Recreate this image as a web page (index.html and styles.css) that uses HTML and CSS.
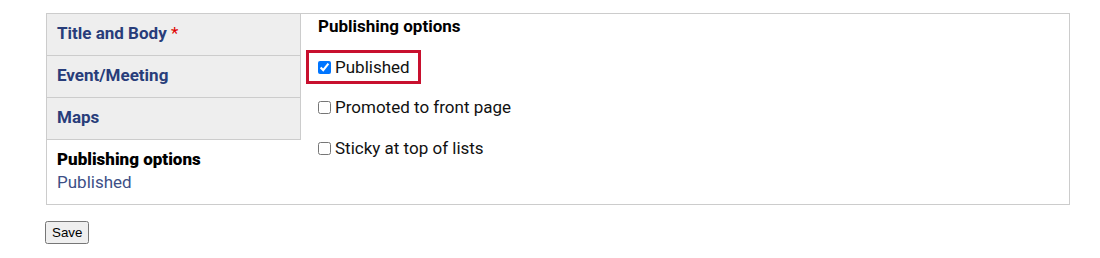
FILE: index.html
```html
<!DOCTYPE html>
<html lang="en">
<head>
<meta charset="utf-8">
<title>Publishing options</title>
<link rel="stylesheet" href="styles.css">
</head>
<body>
<div class="page">
  <div class="vtabs">
    <ul class="tab-list">
      <li class="tab"><a class="tab-link" href="#">Title and Body <span class="req">*</span></a></li>
      <li class="tab"><a class="tab-link" href="#">Event/Meeting</a></li>
      <li class="tab"><a class="tab-link" href="#">Maps</a></li>
      <li class="tab tab-active"><a class="tab-link" href="#"><strong class="tab-title">Publishing options</strong><span class="tab-summary">Published</span></a></li>
    </ul>
    <div class="pane">
      <h3 class="pane-title">Publishing options</h3>
      <div class="item"><label class="check highlight"><input type="checkbox" checked><span>Published</span></label></div>
      <div class="item"><label class="check"><input type="checkbox"><span>Promoted to front page</span></label></div>
      <div class="item"><label class="check"><input type="checkbox"><span>Sticky at top of lists</span></label></div>
    </div>
  </div>
  <button class="save" type="button">Save</button>
</div>
</body>
</html>
```

FILE: styles.css
```css
body {
  margin: 8px;
  font-family: Roboto, "Liberation Sans", sans-serif;
  font-size: 17px;
  color: #000;
  background: #fff;
}
.page {
  padding: 5px 0 0 37px;
}
.vtabs {
  box-sizing: border-box;
  width: 1024px;
  margin-left: 1px;
  border: 1px solid #ccc;
  display: flex;
}
.tab-list {
  list-style: none;
  margin: 0;
  padding: 0;
  width: 254px;
  flex: none;
  display: flex;
  flex-direction: column;
}
.tab {
  background: #eee;
  border-bottom: 1px solid #ccc;
  border-right: 1px solid #ccc;
  height: 41px;
}
.tab-link {
  display: block;
  padding: 10px 10px 12px;
  line-height: 19px;
  font-weight: 700;
  color: #283d7a;
  text-decoration: none;
}
.req {
  color: #e00000;
  font-weight: 400;
}
.tab-active {
  background: #fff;
  border: none;
  height: auto;
  flex: 1;
}
.tab-title {
  display: block;
  color: #000;
}
.tab-summary {
  display: block;
  margin-top: 3px;
  line-height: 20px;
  font-weight: 400;
  color: #3d4f86;
}
.pane {
  flex: 1;
  padding: 3px 17px 0;
}
.pane-title {
  margin: 0 0 10px;
  font-size: 17px;
  line-height: 19px;
  font-weight: 700;
}
.item {
  height: 41px;
  display: flex;
  align-items: center;
}
.check {
  display: inline-flex;
  align-items: center;
  line-height: 19px;
  color: #111;
}
.check input {
  margin: 0 4px 0 0;
  width: 13px;
  height: 13px;
}
.highlight {
  border: 3px solid #c8102e;
  padding: 5px 8px 4px 9px;
  margin-left: -12px;
}
.save {
  display: block;
  margin-top: 16px;
  height: 23px;
  padding: 1px 5px;
  font-family: "Liberation Sans", Arial, sans-serif;
  font-size: 13.33px;
}
```
